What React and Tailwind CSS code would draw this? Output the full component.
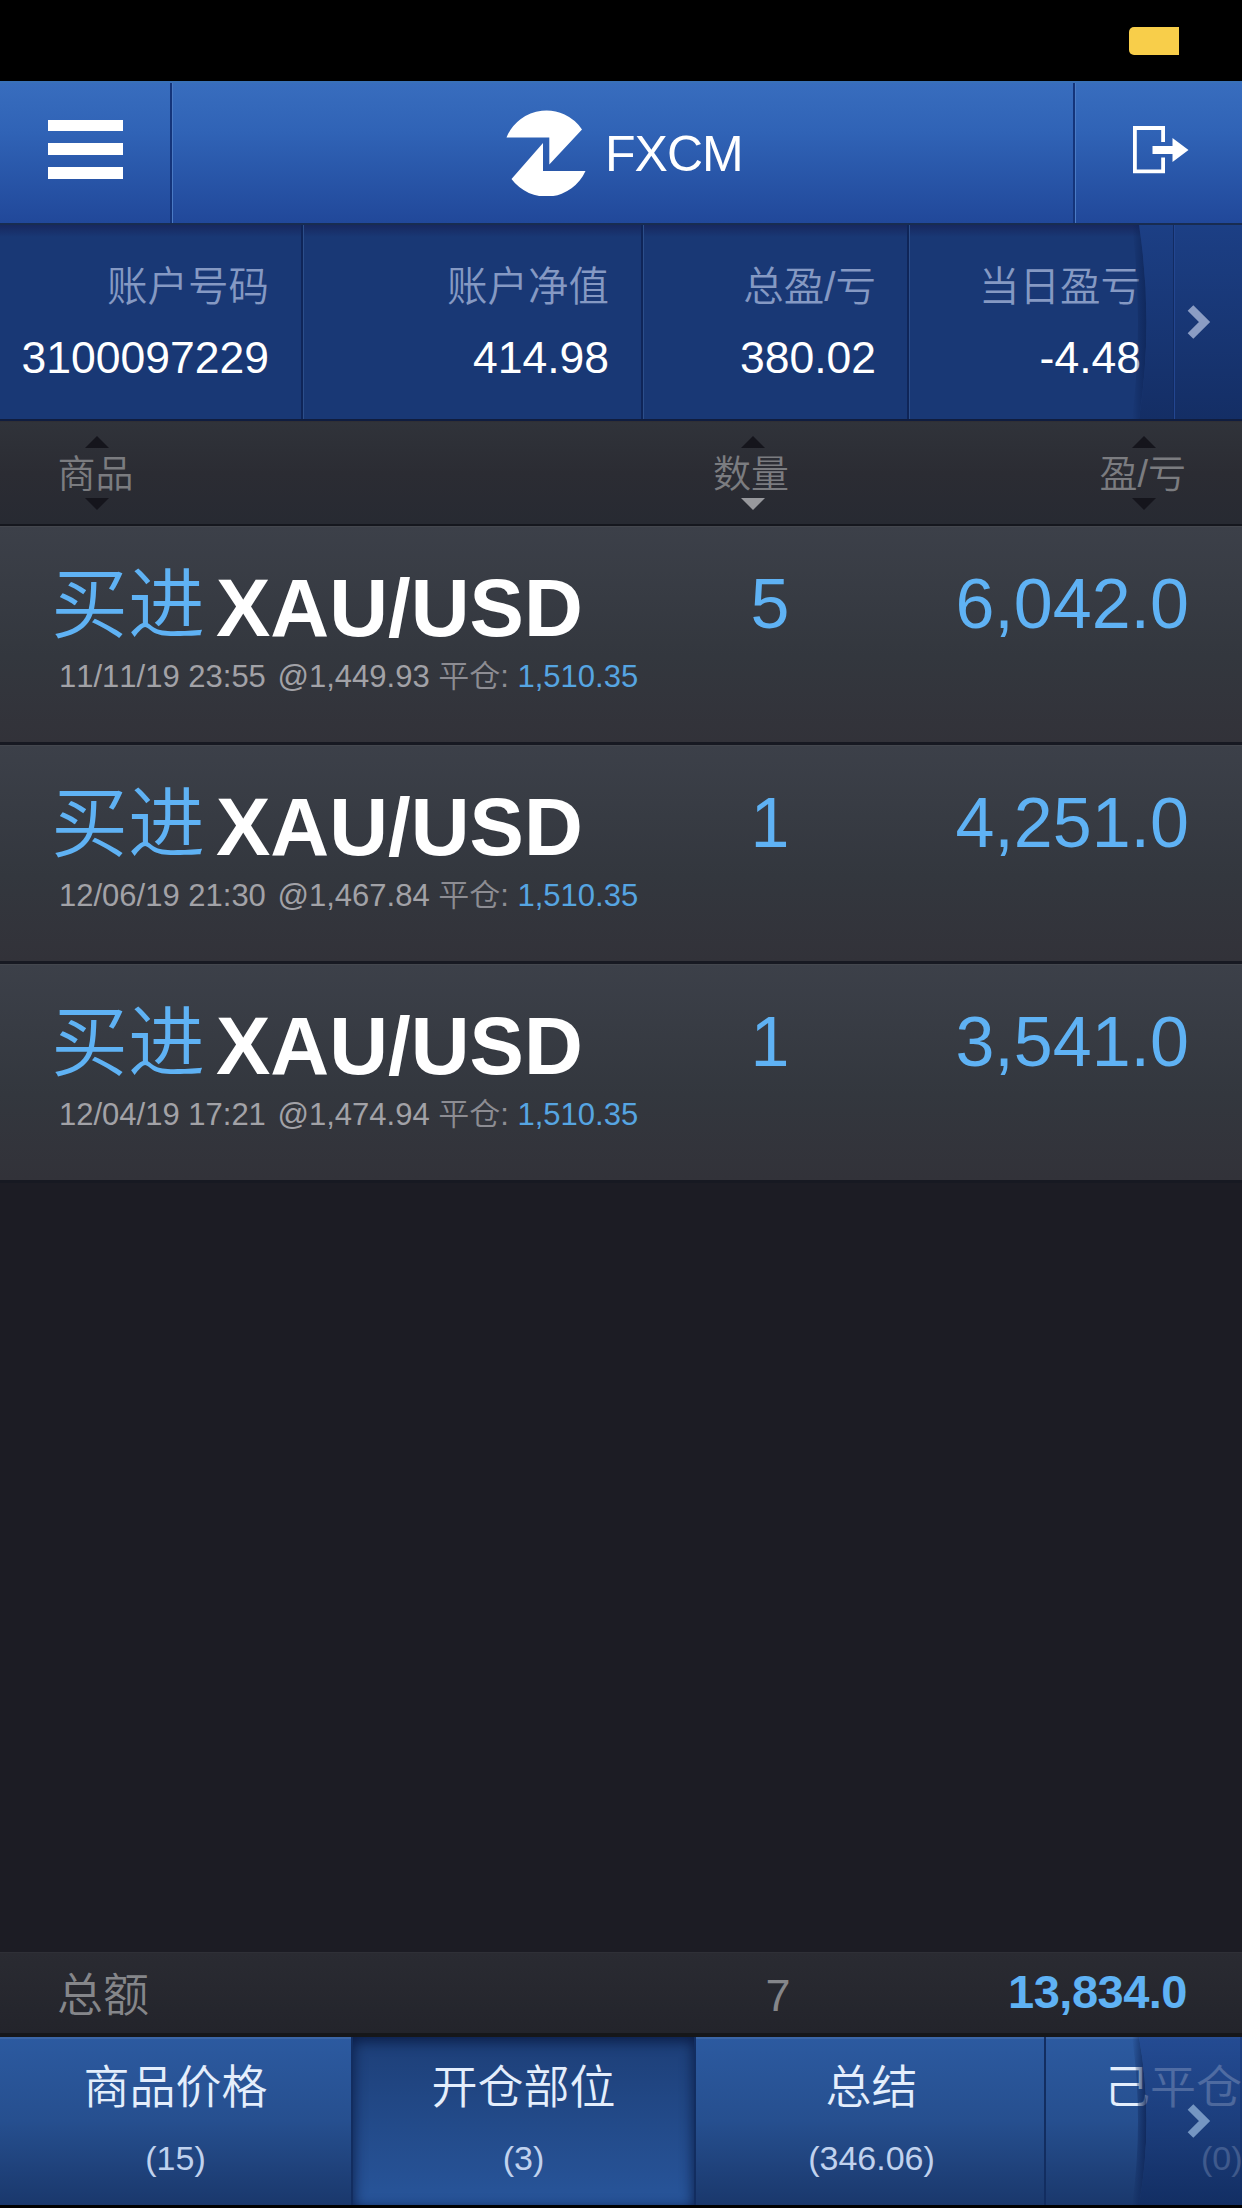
import React, { useState } from 'react';
import clsx from 'clsx';

const ACCOUNT = [
  { label: '账户号码', value: '3100097229', width: 'w-[303px] pr-[32px]' },
  { label: '账户净值', value: '414.98', width: 'w-[340px] pr-[32px] shadow-[inset_1px_0_0_#2c4e8a]' },
  { label: '总盈/亏', value: '380.02', width: 'w-[266px] pr-[31px] shadow-[inset_1px_0_0_#2c4e8a]' },
  { label: '当日盈亏', value: '-4.48', width: 'w-[333px] pr-[99px] shadow-[inset_1px_0_0_#2c4e8a]' },
];

const POSITIONS = [
  { id: 1, side: '买进', symbol: 'XAU/USD', qty: 5, pl: '6,042.0', time: '11/11/19 23:55', open: '1,449.93', close: '1,510.35' },
  { id: 2, side: '买进', symbol: 'XAU/USD', qty: 1, pl: '4,251.0', time: '12/06/19 21:30', open: '1,467.84', close: '1,510.35' },
  { id: 3, side: '买进', symbol: 'XAU/USD', qty: 1, pl: '3,541.0', time: '12/04/19 17:21', open: '1,474.94', close: '1,510.35' },
];

const TABS = [
  { id: 'rates', label: '商品价格', count: '(15)', width: 'w-[353px] items-center' },
  { id: 'open', label: '开仓部位', count: '(3)', width: 'w-[343px] items-center' },
  { id: 'summary', label: '总结', count: '(346.06)', width: 'w-[350px] items-center pl-[3px]' },
  { id: 'closed', label: '己平仓', count: '(0)', width: 'w-[196px] items-start pl-[58px]' },
];

function Logo() {
  return (
    <svg width="80" height="86" viewBox="0 0 80 86" fill="#fff" className="shrink-0">
      <path d="M0.5 27.5A43 43 0 0 1 76 19.5L43.3 54.5V27.5Z" />
      <path d="M37 33V61H79.5A43 43 0 0 1 5.5 69Z" />
    </svg>
  );
}

function LogoutIcon() {
  return (
    <svg width="56" height="48" viewBox="0 0 56 48" fill="#fff">
      <path d="M0 0H32V16H28.2V4H3.8V43.5H28.2V31.5H32V47.3H0Z" />
      <path d="M19.5 20H39.5V12L55.5 24L39.5 36V28H19.5Z" />
    </svg>
  );
}

function Chevron() {
  return (
    <svg width="24" height="34" viewBox="0 0 24 34" fill="none" stroke="currentColor" strokeWidth="8">
      <path d="M3.5 3L17.5 17L3.5 31" />
    </svg>
  );
}

function SortLabel({ text, active, className }) {
  return (
    <div className={clsx('flex flex-col items-center', className)}>
      <svg width="24" height="12" className="text-[#15151c]"><path d="M0 12L12 0L24 12Z" fill="currentColor" /></svg>
      <span className="pt-[3px] pr-[3px] text-[38px] leading-[47px] font-[350] whitespace-nowrap text-[#7b7c80]">{text}</span>
      <svg width="24" height="12" className={active ? 'text-[#98999d]' : 'text-[#15151c]'}>
        <path d="M0 0L12 12L24 0Z" fill="currentColor" />
      </svg>
    </div>
  );
}

function PositionRow({ p }) {
  return (
    <div className="grid h-[219px] grid-cols-[680px_180px_1fr] border-t border-b-3 border-t-[#44474e] border-b-[#171922] bg-linear-to-b from-[#3c4049] via-[#33373e] via-60% to-[#323239] pt-[37px]">
      <div className="pl-[51px]">
        <div className="flex h-[90px] whitespace-nowrap">
          <span className="text-[77px] leading-[82px] font-[350] text-[#5fb2f4]">{p.side}</span>
          <span className="ml-[11px] text-[81.5px] leading-[88px] font-bold text-white">{p.symbol}</span>
        </div>
        <p className="mt-[5px] pl-[8px] text-[31px] leading-9 whitespace-nowrap text-[#a2a2a7]">
          {p.time} <span className="ml-[3px]">@{p.open}</span> <span className="font-[350] text-[#8d8d93]">平仓:</span>{' '}
          <span className="text-[#56a5e2]">{p.close}</span>
        </p>
      </div>
      <span className="text-center text-[70px] leading-[80px] text-[#5fb2f4]">{p.qty}</span>
      <span className="pr-[53px] text-right text-[70px] leading-[80px] text-[#5fb2f4]">{p.pl}</span>
    </div>
  );
}

export default function App() {
  const [tab, setTab] = useState('open');

  return (
    <div className="flex h-[2208px] w-[1242px] flex-col overflow-hidden bg-black font-['Liberation_Sans','Noto_Sans_CJK_SC',sans-serif] [font-kerning:none]">
      {/* Status bar */}
      <div className="flex h-[81px] shrink-0 items-center justify-end pr-[63px]">
        <div className="h-[28px] w-[50px] rounded-l-[5px] bg-[#f8ce4a]" />
      </div>

      {/* Title bar */}
      <header className="flex h-[142px] shrink-0 border-t-2 border-t-[#3971b8] bg-linear-to-b from-[#386dbe] via-[#3063b6] via-35% to-[#21489a]">
        <button className="flex w-[172px] flex-col items-start justify-center gap-3 border-r-2 border-[#14347a] pb-[7px] pl-12">
          <span className="h-[11px] w-[75px] bg-white" />
          <span className="h-[12px] w-[75px] bg-white" />
          <span className="h-[12px] w-[75px] bg-white" />
        </button>
        <div className="flex w-[901px] items-center border-l border-[#4a7ac4] pl-[333px]">
          <Logo />
          <h1 className="ml-[19px] pt-[2px] text-[50px] tracking-[-1px] text-white">FXCM</h1>
        </div>
        <button className="flex flex-1 items-center border-l-2 border-[#14347a] pb-[6px] pl-[58px] shadow-[inset_1px_0_0_#4a7ac4]">
          <LogoutIcon />
        </button>
      </header>

      {/* Account summary */}
      <section className="relative flex h-[198px] shrink-0 border-t-2 border-b-2 border-t-[#182c51] border-b-[#101d3f] bg-[#193875] bg-linear-to-b from-[#17285f] to-[#193875] to-[12px]">
        {ACCOUNT.map((a) => (
          <div key={a.label} className={clsx('flex shrink-0 flex-col items-end border-r-2 border-[#0f2558] pt-[38px]', a.width)}>
            <span className="text-[40.5px] leading-[48px] font-[350] text-[#8599c3]">{a.label}</span>
            <span className="mt-[23px] text-[44.5px] leading-[48px] text-white">{a.value}</span>
          </div>
        ))}
        <div className="absolute inset-y-0 right-0 flex w-[112px] items-center pl-[57px] text-[#8b9dc4]">
          <svg width="112" height="194" className="absolute inset-0">
            <defs>
              <linearGradient id="moreTop" x1="0" y1="0" x2="0" y2="1">
                <stop offset="0" stopColor="#1c3f85" />
                <stop offset="1" stopColor="#142e65" />
              </linearGradient>
              <linearGradient id="edgeTop">
                <stop offset="0" stopColor="#0d2355" stopOpacity="0" />
                <stop offset="1" stopColor="#0d2355" stopOpacity="0.75" />
              </linearGradient>
            </defs>
            <path d="M2 0H9Q24 97 9 194H2Q14 97 2 0Z" fill="url(#edgeTop)" />
            <path d="M9 0Q24 97 9 194H112V0Z" fill="url(#moreTop)" />
            <path d="M43.5 0V194" stroke="#122b62" />
            <path d="M44.5 0V194" stroke="#234690" />
          </svg>
          <span className="relative"><Chevron /></span>
        </div>
      </section>

      {/* Column headings */}
      <div className="grid h-[105px] shrink-0 grid-cols-[661px_180px_1fr] border-t border-b-2 border-t-[#2f2f35] border-b-[#15171e] bg-linear-to-b from-[#30333a] via-[#2b2c33] to-[#272a32] pt-[14px]">
        <SortLabel text="商品" className="ml-[57px] w-[80px]" />
        <SortLabel text="数量" active className="ml-[3px]" />
        <SortLabel text="盈/亏" className="ml-auto mr-[53px]" />
      </div>

      {/* Positions */}
      <main className="flex-1 bg-[#1c1c24]">
        {POSITIONS.map((p) => <PositionRow key={p.id} p={p} />)}
      </main>

      {/* Totals */}
      <div className="grid h-[85px] shrink-0 grid-cols-[688px_180px_1fr] border-t border-b-4 border-t-[#2f3037] border-b-[#16171a] bg-linear-to-b from-[#2a2b32] to-[#23242b]">
        <span className="pl-[57px] text-[46px] leading-[84px] font-[350] text-[#85868a]">总额</span>
        <span className="text-center text-[45px] leading-[86px] text-[#85868a]">7</span>
        <span className="pr-[55px] text-right text-[47px] leading-[78px] font-bold tracking-[-0.5px] text-[#5fb2f4]">13,834.0</span>
      </div>

      {/* Tabs */}
      <nav className="relative flex h-[171px] shrink-0 overflow-hidden border-b-3 border-black">
        {TABS.map((t) => (
          <button
            key={t.id}
            onClick={() => setTab(t.id)}
            className={clsx(
              'flex shrink-0 flex-col border-r-2 border-[#122d60] bg-linear-to-b pt-[20px]',
              t.width,
              tab === t.id
                ? 'from-[#1d3f78] to-[#28559a] shadow-[inset_0_4px_14px_#0b1c45]'
                : 'from-[#2c5aa0] via-[#264f8f] to-[#1a386c] shadow-[inset_0_2px_0_#3c66a6]'
            )}
          >
            <span className="text-[46px] leading-[60px] font-[350] whitespace-nowrap text-[#e4eefc]">{t.label}</span>
            <span className={clsx('mt-[20px] text-[34px] leading-[42px] text-[#c0d2ee]', t.id === 'closed' && 'ml-[97px]')}>{t.count}</span>
          </button>
        ))}
        <div className="absolute inset-y-0 right-0 flex w-[112px] items-center pl-[57px] text-[#7596c2]">
          <svg width="112" height="168" className="absolute inset-0">
            <defs>
              <linearGradient id="moreTab" x1="0" y1="0" x2="0" y2="1">
                <stop offset="0" stopColor="#21468e" />
                <stop offset="1" stopColor="#102b60" />
              </linearGradient>
              <linearGradient id="edgeTab">
                <stop offset="0" stopColor="#0d2355" stopOpacity="0" />
                <stop offset="1" stopColor="#0d2355" stopOpacity="0.85" />
              </linearGradient>
            </defs>
            <path d="M2 0H9Q24 84 9 168H2Q14 84 2 0Z" fill="url(#edgeTab)" />
            <path d="M9 0Q24 84 9 168H112V0Z" fill="url(#moreTab)" fillOpacity="0.75" />
          </svg>
          <span className="relative"><Chevron /></span>
        </div>
      </nav>
    </div>
  );
}
